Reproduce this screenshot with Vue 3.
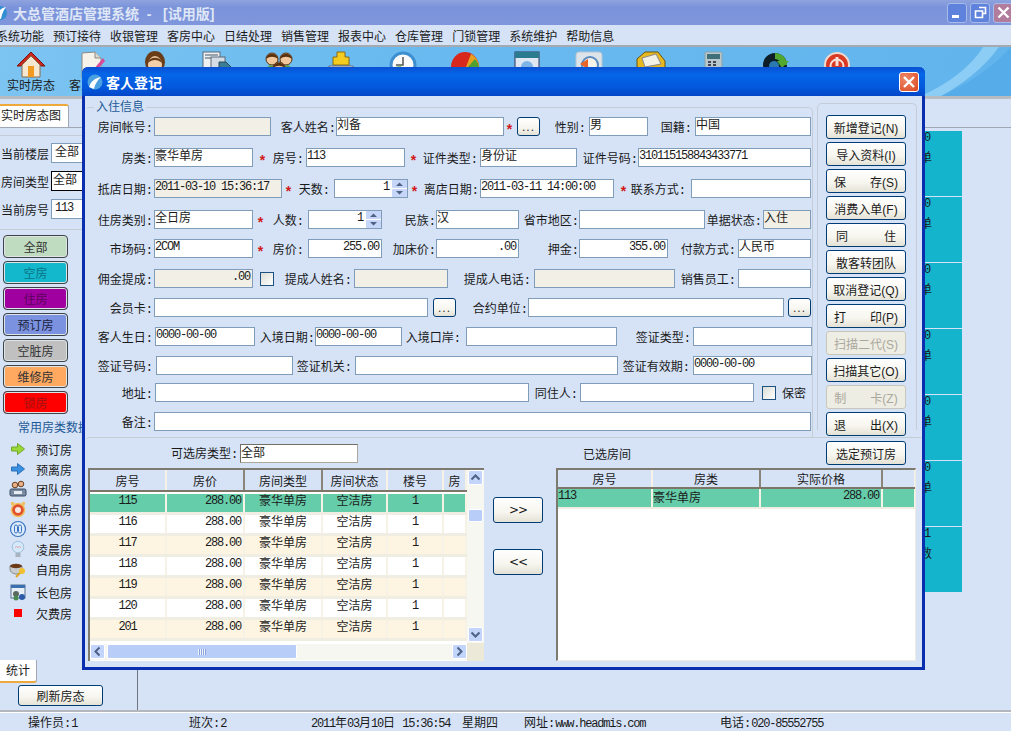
<template>
  <div class="app">
    <!-- 主窗口标题栏 -->
    <div class="titlebar">
      <svg class="app-icon" width="14" height="16" viewBox="0 0 14 16"><circle cx="3" cy="8" r="7" fill="#2f8fd0"/><path d="M-2 12 C1 6 4 3 9 2 C6 6 5 9 4 14 Z" fill="#fff"/></svg>
      <span class="title-text">{{ windowTitle }}</span>
      <div class="win-btns">
        <span class="win-btn"><i class="min-mark"></i></span>
        <span class="win-btn"><svg width="13" height="13" viewBox="0 0 13 13"><path d="M5 1.5h6.5v6h-3M1.5 5h7v6.5h-7z" fill="none" stroke="#fff" stroke-width="1.6"/></svg></span>
        <span class="win-btn close"><svg width="13" height="13" viewBox="0 0 13 13"><path d="M1.5 1.5l10 10M11.5 1.5l-10 10" stroke="#fff" stroke-width="2.4"/></svg></span>
      </div>
    </div>
    <div class="menubar">
      <span v-for="m in menus" :key="m">{{ m }}</span>
    </div>

    <!-- 工具栏 -->
    <div class="toolbar">
      <svg class="swoosh" width="90" height="49" viewBox="0 0 90 49"><path d="M20 49 C45 38 70 22 90 0 L90 49 Z" fill="#4fa5e6" opacity=".6"/><path d="M0 49 C25 38 50 20 62 0 L78 0 C62 22 40 38 20 49 Z" fill="#9ad6f7" opacity=".75"/></svg>
      <div v-for="t in tools" :key="t.id" class="tool">
        <svg width="30" height="30" viewBox="0 0 30 30">
          <template v-if="t.id === 'house'">
            <path d="M15 2 L29 16 L25 16 L15 6 L5 16 L1 16 Z" fill="#c8281e" stroke="#7a1510"/>
            <path d="M6 15 L15 6 L24 15 L24 27 L6 27 Z" fill="#f5e8d0" stroke="#8a6a48"/>
            <rect x="12" y="16" width="6" height="11" fill="#f09a20"/>
          </template>
          <template v-else-if="t.id === 'doc'">
            <path d="M4 3 L17 2 L23 8 L23 28 L4 28 Z" fill="#f6f3ea" stroke="#8a8a84"/>
            <path d="M17 2 L17 8 L23 8" fill="#dcdad0" stroke="#8a8a84"/>
            <path d="M25 8 L16 19 L18 21 L27 11 Z" fill="#d84a98"/>
            <path d="M16 19 L14 23 L18 21 Z" fill="#e8c040"/>
          </template>
          <template v-else-if="t.id === 'person'">
            <ellipse cx="15" cy="12" rx="10" ry="11" fill="#6a3c18"/>
            <ellipse cx="15" cy="15" rx="7" ry="9" fill="#f6cfa8"/>
            <path d="M8 13 C9 6 21 6 22 13 C18 9 12 9 8 13 Z" fill="#6a3c18"/>
          </template>
          <template v-else-if="t.id === 'docs'">
            <rect x="1" y="2" width="17" height="24" fill="#eef0f2" stroke="#5a6a78"/>
            <path d="M3 5h13M3 8h13" stroke="#46586a"/>
            <rect x="9" y="7" width="14" height="19" fill="#d4dde6" stroke="#5a6a78"/>
            <path d="M17 12 L24 12 L29 17 L29 26 L17 26 Z" fill="#3c7d96" stroke="#2c4a5a"/>
          </template>
          <template v-else-if="t.id === 'people'">
            <circle cx="8" cy="9" r="6" fill="#f3c79c" stroke="#5a3210"/>
            <circle cx="22" cy="9" r="6" fill="#f3c79c" stroke="#5a3210"/>
            <path d="M2 9 C3 2 13 2 14 9 C10 6 6 6 2 9 Z" fill="#5a3210"/>
            <path d="M16 9 C17 2 27 2 28 9 C24 6 20 6 16 9 Z" fill="#5a3210"/>
            <path d="M1 24 C2 16 6 14 9 16 L21 16 C24 14 28 16 29 24 Z" fill="#5fa33a"/>
            <circle cx="15" cy="18" r="6" fill="#f3c79c" stroke="#5a3210"/>
            <path d="M9 18 C10 11 20 11 21 18 C17 15 13 15 9 18 Z" fill="#5a3210"/>
          </template>
          <template v-else-if="t.id === 'coins'">
            <path d="M11 2 h8 v5 h4 v8 H7 V7 h4 Z" fill="#f4cc20" stroke="#8a6a10"/>
            <path d="M3 16 H27 L29 26 H1 Z" fill="#e8eaf0" stroke="#667"/>
          </template>
          <template v-else-if="t.id === 'clock'">
            <circle cx="15" cy="15" r="12" fill="#fafafa" stroke="#3d8fd0" stroke-width="3"/>
            <path d="M15 7 V15 L8 15" stroke="#555" stroke-width="1.500" fill="none"/>
            <path d="M3 18 A12 12 0 0 0 10 26 L14 15 Z" fill="#6ab050" opacity=".7"/>
          </template>
          <template v-else-if="t.id === 'pie'">
            <path d="M1 17 A14 15 0 0 1 29 17 Z" fill="#d8281e"/>
            <path d="M21 4 A14 15 0 0 1 29 17 L16 17 Z" fill="#e8a020"/>
            <path d="M25 9 A14 15 0 0 1 29 17 L18 17 Z" fill="#50a030"/>
            <path d="M1 17 H29 L28 26 H2 Z" fill="#a81810"/>
          </template>
          <template v-else-if="t.id === 'window'">
            <rect x="3" y="2" width="24" height="26" fill="#dfe8f2" stroke="#335"/>
            <rect x="3" y="2" width="24" height="6" fill="#2a7a90"/>
            <circle cx="15" cy="17" r="6" fill="#7fb4e6"/>
          </template>
          <template v-else-if="t.id === 'refresh'">
            <rect x="2" y="2" width="26" height="26" rx="3" fill="#dce4ea" stroke="#b8c4ce"/>
            <circle cx="16" cy="15" r="8" fill="#f7f3e8" stroke="#5a8ac0" stroke-width="2"/>
            <path d="M6 14 L14 9 L14 19 Z" fill="#e86428"/>
          </template>
          <template v-else-if="t.id === 'folder'">
            <path d="M1 9 L9 2 L22 2 L29 11 L29 28 L1 28 Z" fill="#e8b820" stroke="#6a5210"/>
            <path d="M6 8 L20 4 L25 14 L9 17 Z" fill="#f2f0e4" stroke="#888"/>
          </template>
          <template v-else-if="t.id === 'calc'">
            <rect x="7" y="2" width="17" height="26" rx="1" fill="#b8c8cc" stroke="#8aa0a8"/>
            <rect x="9" y="4" width="13" height="5" fill="#3f6f78"/>
            <path d="M10 12h3M15 12h3M10 15h3M15 15h3" stroke="#445" stroke-width="2"/>
          </template>
          <template v-else-if="t.id === 'arrow'">
            <circle cx="15" cy="15" r="12" fill="#0e1e28"/>
            <path d="M15 3 A12 12 0 0 1 27 15 L21 15 A6 6 0 0 0 15 9 Z" fill="#50a830"/>
            <path d="M29 11 L22 18 L17 11 Z" fill="#50a830"/>
            <circle cx="14" cy="16" r="5" fill="#2a7ab0"/>
          </template>
          <template v-else>
            <circle cx="15" cy="15" r="12" fill="#d83a24" stroke="#f0d8cc" stroke-width="2"/>
            <circle cx="15" cy="16" r="6.500" fill="none" stroke="#f8e0d8" stroke-width="2"/>
            <rect x="13.500" y="7" width="3" height="9" fill="#f8e0d8"/>
          </template>
        </svg>
        <span v-if="t.label" class="tool-label">{{ t.label }}</span>
      </div>
    </div>

    <div class="main">
      <!-- 左侧面板 -->
      <div class="left-panel">
        <div class="tab-row"><div class="tab">实时房态图</div></div>
        <div class="filters">
          <div v-for="f in filters" :key="f.label" class="filter">
            <span class="filter-label">{{ f.label }}</span>
            <div class="filter-box" :class="{ active: f.active, mono: f.mono }">{{ f.value }}</div>
          </div>
        </div>
        <div class="status-btns">
          <div v-for="b in statusBtns" :key="b.t" class="status-btn" :style="{ background: b.bg, color: b.fg }">{{ b.t }}</div>
        </div>
        <div class="legend-title">常用房类数据</div>
        <div class="legend">
          <div v-for="l in legends" :key="l.t" class="legend-row" :class="l.cls">
            <svg class="legend-icon" width="18" height="18" viewBox="0 0 18 18">
              <template v-if="l.i === 'green'"><path d="M2.500 7h6V3.500L15.500 9l-7 5.500V11h-6z" fill="#9ad838" stroke="#6fa828"/></template>
              <template v-else-if="l.i === 'blue'"><path d="M2.500 7h6V3.500L15.500 9l-7 5.500V11h-6z" fill="#3a90e0" stroke="#2a70b8"/></template>
              <template v-else-if="l.i === 'team'"><circle cx="6" cy="5" r="2.800" fill="#e8b088" stroke="#6a4020"/><circle cx="12" cy="4" r="2.800" fill="#e8b088" stroke="#6a4020"/><rect x="1" y="9" width="16" height="7" rx="1.500" fill="#7a8ca4" stroke="#3a4a60"/><rect x="5" y="11" width="8" height="3" fill="#e8ecf0"/></template>
              <template v-else-if="l.i === 'alarm'"><circle cx="9" cy="10" r="6.500" fill="#e0502c" stroke="#f0c060" stroke-width="1.500"/><circle cx="9" cy="10" r="3" fill="#f8e8e0"/><circle cx="3.500" cy="3.500" r="1.800" fill="#f0c060"/><circle cx="14.500" cy="3.500" r="1.800" fill="#f0c060"/></template>
              <template v-else-if="l.i === 'half'"><circle cx="9" cy="9" r="7.500" fill="#dcebfb" stroke="#3a74c0" stroke-width="1.200"/><rect x="5.500" y="5" width="3" height="8" rx="1.500" fill="none" stroke="#3a74c0"/><rect x="9.500" y="5" width="3" height="8" rx="1.500" fill="none" stroke="#3a74c0"/></template>
              <template v-else-if="l.i === 'bulb'"><circle cx="9" cy="7" r="5.800" fill="#d4e8fb" stroke="#a4c0d8"/><path d="M6 8l1.500-2 1.500 2 1.500-2L12 8" fill="none" stroke="#e8a0a0" stroke-width=".8"/><rect x="6.500" y="13" width="5" height="4" fill="#a8b4be"/></template>
              <template v-else-if="l.i === 'cup'"><path d="M1 6h12v3c0 3-3 5-6 5s-6-2-6-5z" fill="#c8ccd0" stroke="#8a8a80"/><ellipse cx="7" cy="6" rx="6" ry="2.200" fill="#6a3a18"/><circle cx="13" cy="11" r="3" fill="#f0c030"/><path d="M11 13l-4 4" stroke="#e0a820" stroke-width="2"/></template>
              <template v-else-if="l.i === 'cal'"><rect x="2" y="2" width="14" height="13" fill="#e8eef6" stroke="#5a7090"/><rect x="2" y="2" width="14" height="3" fill="#3a70b0"/><circle cx="7" cy="11" r="3" fill="#5a6a60"/><circle cx="7" cy="15" r="2.500" fill="#4a8a50"/><circle cx="13" cy="14" r="3" fill="#2a5aa8"/></template>
              <template v-else><rect x="5" y="5" width="8" height="8" fill="#f00"/></template>
            </svg>
            <span>{{ l.t }}</span>
          </div>
        </div>
        <div class="stat-tab">统计</div>
        <div class="xp-btn refresh-btn">刷新房态</div>
      </div>

      <!-- 房态区域，大部分被对话框盖住 -->
      <div class="room-area">
        <div class="tiles">
          <div v-for="(r, i) in tiles" :key="i" class="tile">
            <div class="mono tile-num">{{ r[0] }}</div>
            <div class="tile-sub">{{ r[1] }}</div>
          </div>
        </div>
      </div>
    </div>

    <div class="statusbar">
      <span class="st" style="width: 161px">操作员:<b class="mono">1</b></span>
      <span class="st" style="width: 122px">班次:<b class="mono">2</b></span>
      <span class="st" style="width: 151px"><b class="mono">2011</b>年<b class="mono">03</b>月<b class="mono">10</b>日 <b class="mono">15:36:54</b></span>
      <span class="st" style="width: 62px">星期四</span>
      <span class="st" style="width: 196px">网址:<b class="mono">www.headmis.com</b></span>
      <span class="st">电话:<b class="mono">020-85552755</b></span>
    </div>

    <!-- 客人登记对话框 -->
    <div class="dialog">
      <div class="dlg-title">
        <svg width="16" height="16" viewBox="0 0 16 16"><circle cx="8" cy="8" r="7.500" fill="#4a9fe0"/><path d="M2 13 C4 7 8 4 14 3 C10 7 8 10 7 15 Z" fill="#fff"/></svg>
        <span>客人登记</span>
        <div class="dlg-close"><svg width="12" height="12" viewBox="0 0 12 12"><path d="M1 1l10 10M11 1L1 11" stroke="#fff" stroke-width="2.400"/></svg></div>
      </div>
      <div class="dlg-top">
        <div class="form-group">
          <span class="group-legend">入住信息</span>
          <div v-for="(row, ri) in formRows" :key="ri" class="form-row" :style="{ marginTop: row.mt + 'px' }">
            <template v-for="(it, k) in row.items" :key="k">
              <div v-if="it.k === 'l'" class="f-label" :style="it.s">{{ it.t }}</div>
              <div v-else-if="it.k === 's'" class="f-star" :style="it.s">*</div>
              <div v-else-if="it.k === 'b'" class="xp-btn f-more" :style="it.s">...</div>
              <div v-else-if="it.k === 'c'" class="f-check" :style="it.s"></div>
              <div v-else class="f-input" :class="{ dis: it.dis, right: it.right, mono: it.mono }" :style="it.s">
                <span>{{ it.t }}</span>
                <div v-if="it.spin" class="spin">
                  <svg width="15" height="17" viewBox="0 0 15 17"><rect width="15" height="8" rx="1" fill="#c6d6f8"/><rect y="9" width="15" height="8" rx="1" fill="#c6d6f8"/><path d="M4 6l3.500-3.500L11 6zM4 11l3.500 3.500L11 11z" fill="#4d6185"/></svg>
                </div>
              </div>
            </template>
          </div>
        </div>
        <div class="action-group">
          <div v-for="b in actions" :key="b.t" class="xp-btn action" :class="{ off: b.off }">{{ b.t }}</div>
        </div>
      </div>

      <div class="dlg-bottom">
        <div class="pick-row">
          <span class="pick-label">可选房类型:</span>
          <div class="pick-input">全部</div>
          <span class="picked-label">已选房间</span>
          <div class="xp-btn pick-btn">选定预订房</div>
        </div>
        <div class="grids">
          <div class="grid left-grid">
            <div class="grid-body">
              <div class="g-head">
                <div v-for="c in leftCols" :key="c.t" class="g-cell" :style="{ width: c.w + 'px' }">{{ c.t }}</div>
              </div>
              <div v-for="(r, i) in rooms" :key="r" class="g-row" :class="{ sel: i === 0, alt: i > 0 && i % 2 === 0 }">
                <div class="g-cell mono" :style="{ width: leftCols[0].w + 'px' }">{{ r }}</div>
                <div class="g-cell mono num" :style="{ width: leftCols[1].w + 'px' }">288.00</div>
                <div class="g-cell" :style="{ width: leftCols[2].w + 'px' }">豪华单房</div>
                <div class="g-cell" :style="{ width: leftCols[3].w + 'px' }">空洁房</div>
                <div class="g-cell mono" :style="{ width: leftCols[4].w + 'px' }">1</div>
                <div class="g-cell" :style="{ width: leftCols[5].w + 'px' }"></div>
              </div>
              <div class="hscroll">
                <div class="sb-btn"><svg width="15" height="15" viewBox="0 0 15 15"><path d="M9.500 3.500L5.500 7.500l4 4" fill="none" stroke="#4d6185" stroke-width="2"/></svg></div>
                <div class="h-thumb"><i></i></div>
                <div class="sb-btn"><svg width="15" height="15" viewBox="0 0 15 15"><path d="M5.500 3.500l4 4-4 4" fill="none" stroke="#4d6185" stroke-width="2"/></svg></div>
              </div>
            </div>
            <div class="vscroll">
              <div class="sb-btn"><svg width="15" height="15" viewBox="0 0 15 15"><path d="M3.500 9.500l4-4 4 4" fill="none" stroke="#4d6185" stroke-width="2"/></svg></div>
              <div class="v-thumb"></div>
              <div class="sb-btn v-down"><svg width="15" height="15" viewBox="0 0 15 15"><path d="M3.500 5.500l4 4 4-4" fill="none" stroke="#4d6185" stroke-width="2"/></svg></div>
              <div class="corner"></div>
            </div>
          </div>
          <div class="move-btns">
            <div class="xp-btn move">&gt;&gt;</div>
            <div class="xp-btn move">&lt;&lt;</div>
          </div>
          <div class="grid right-grid">
            <div class="g-head short">
              <div v-for="c in rightCols" :key="c.t" class="g-cell" :style="{ width: c.w + 'px' }">{{ c.t }}</div>
            </div>
            <div class="g-row sel short-row">
              <div class="g-cell mono lft" :style="{ width: rightCols[0].w + 'px' }">113</div>
              <div class="g-cell lft" :style="{ width: rightCols[1].w + 'px' }">豪华单房</div>
              <div class="g-cell mono num" :style="{ width: rightCols[2].w + 'px' }">288.00</div>
              <div class="g-cell" :style="{ width: rightCols[3].w + 'px' }"></div>
            </div>
          </div>
        </div>
      </div>
    </div>
  </div>
</template>

<script setup>
const windowTitle = '大总管酒店管理系统  -   [试用版]'

const menus = ['系统功能', '预订接待', '收银管理', '客房中心', '日结处理', '销售管理', '报表中心', '仓库管理', '门锁管理', '系统维护', '帮助信息']

const tools = [
  { id: 'house', label: '实时房态' },
  { id: 'doc', label: '客人登记' },
  { id: 'person' }, { id: 'docs' }, { id: 'people' }, { id: 'coins' }, { id: 'clock' },
  { id: 'pie' }, { id: 'window' }, { id: 'refresh' }, { id: 'folder' }, { id: 'calc' },
  { id: 'arrow' }, { id: 'power' }
]

const filters = [
  { label: '当前楼层', value: '全部' },
  { label: '房间类型', value: '全部', active: true },
  { label: '当前房号', value: '113', mono: true }
]

const statusBtns = [
  { t: '全部', bg: '#c0dcc0', fg: '#333' },
  { t: '空房', bg: '#14b8cc', fg: '#0b7488' },
  { t: '住房', bg: '#a000a0', fg: '#5c005c' },
  { t: '预订房', bg: '#7b92e0', fg: '#1c2440' },
  { t: '空脏房', bg: '#c0c0c0', fg: '#333' },
  { t: '维修房', bg: '#ffa860', fg: '#333' },
  { t: '锁房', bg: '#ff0000', fg: '#a01010' }
]

const legends = [
  { t: '预订房', i: 'green' }, { t: '预离房', i: 'blue' }, { t: '团队房', i: 'team' },
  { t: '钟点房', i: 'alarm' }, { t: '半天房', i: 'half' }, { t: '凌晨房', i: 'bulb' },
  { t: '自用房', i: 'cup' }, { t: '长包房', i: 'cal', cls: 'gap2' }, { t: '欠费房', i: 'sq', cls: 'gap1' }
]

const tiles = [['0', '单'], ['0', '单'], ['0', '单'], ['0', '单'], ['0', '单'], ['0', '单'], ['1', '数']]

// 表单按原界面的横向坐标排列，相邻控件的间距由坐标算出
const L = (a, b, t) => ({ k: 'l', a, b, t })
const I = (a, b, t = '', o = {}) => ({ k: 'i', a, b, t, mono: /^[\x00-\x7f]+$/.test(t), ...o })
const S = (a) => ({ k: 's', a, b: a + 9 })
const B = (a, b) => ({ k: 'b', a, b })
const C = (a) => ({ k: 'c', a, b: a + 14 })

const rawRows = [
  [117, [L(90, 153, '房间帐号:'), I(154, 271, '', { dis: true }), L(275, 336, '客人姓名:'), I(336, 504, '刘备'), S(505), B(517, 540), L(550, 586, '性别:'), I(589, 648, '男'), L(655, 692, '国籍:'), I(695, 811, '中国')]],
  [148, [L(90, 153, '房类:'), I(154, 253, '豪华单房'), S(258), L(268, 304, '房号:'), I(306, 405, '113'), S(409), L(418, 478, '证件类型:'), I(480, 577, '身份证'), L(578, 638, '证件号码:'), I(638, 811, '310115158843433771')]],
  [179, [L(90, 153, '抵店日期:'), I(154, 282, '2011-03-10 15:36:17', { dis: true }), S(284), L(294, 330, '天数:'), I(334, 408, '1', { right: true, spin: true }), S(410), L(420, 479, '离店日期:'), I(480, 614, '2011-03-11 14:00:00'), S(619), L(628, 686, '联系方式:'), I(691, 811)]],
  [210, [L(90, 153, '住房类别:'), I(154, 253, '全日房'), S(256), L(268, 304, '人数:'), I(308, 382, '1', { right: true, spin: true }), L(400, 436, '民族:'), I(436, 519, '汉'), L(522, 579, '省市地区:'), I(579, 705, ''), L(706, 762, '单据状态:'), I(763, 811, '入住', { dis: true })]],
  [239, [L(90, 153, '市场码:'), I(154, 253, '2COM'), S(256), L(268, 304, '房价:'), I(308, 382, '255.00', { right: true }), L(390, 436, '加床价:'), I(436, 519, '.00', { right: true }), L(540, 579, '押金:'), I(579, 668, '355.00', { right: true }), L(676, 736, '付款方式:'), I(738, 811, '人民币')]],
  [269, [L(90, 153, '佣金提成:'), I(154, 253, '.00', { dis: true, right: true }), C(260), L(280, 352, '提成人姓名:'), I(354, 448, '', { dis: true }), L(458, 531, '提成人电话:'), I(534, 675, '', { dis: true }), L(678, 736, '销售员工:'), I(738, 811)]],
  [298, [L(90, 153, '会员卡:'), I(154, 428), B(433, 456), L(468, 528, '合约单位:'), I(528, 784), B(788, 811)]],
  [327, [L(90, 153, '客人生日:'), I(155, 255, '0000-00-00'), L(256, 315, '入境日期:'), I(315, 402, '0000-00-00'), L(403, 461, '入境口岸:'), I(466, 617), L(630, 691, '签证类型:'), I(693, 812)]],
  [356, [L(90, 153, '签证号码:'), I(156, 293), L(294, 352, '签证机关:'), I(355, 618), L(620, 690, '签证有效期:'), I(693, 812, '0000-00-00')]],
  [383, [L(90, 153, '地址:'), I(155, 529), L(532, 578, '同住人:'), I(580, 754), C(762), { k: 'l', a: 781, b: 806, t: '保密' }]],
  [412, [L(90, 153, '备注:'), I(154, 811)]]
]

const formRows = rawRows.map(([top, items], i) => {
  let prev = 86 // 表单分组框内容的起始 x
  const out = items.map((it) => {
    const s = { marginLeft: it.a - prev + 'px', width: it.b - it.a + 'px' }
    prev = it.b
    return { ...it, s }
  })
  const prevTop = i === 0 ? 108 : rawRows[i - 1][0] + 19
  return { mt: top - prevTop, items: out }
})

const actions = [
  { t: '新增登记(N)' }, { t: '导入资料(I)' }, { t: '保　　存(S)' }, { t: '消费入单(F)' }, { t: '同　　　住' },
  { t: '散客转团队' }, { t: '取消登记(Q)' }, { t: '打　　印(P)' }, { t: '扫描二代(S)', off: true },
  { t: '扫描其它(O)' }, { t: '制　　卡(Z)', off: true }, { t: '退　　出(X)' }
]

const leftCols = [
  { t: '房号', w: 77 }, { t: '房价', w: 78 }, { t: '房间类型', w: 78 },
  { t: '房间状态', w: 65 }, { t: '楼号', w: 56 }, { t: '房', w: 23 }
]
const rightCols = [
  { t: '房号', w: 95 }, { t: '房类', w: 108 }, { t: '实际价格', w: 122 }, { t: '', w: 33 }
]
const rooms = ['115', '116', '117', '118', '119', '120', '201']
</script>

<style>
html, body {
  margin: 0;
  padding: 0;
  background: #d6e3f7;
}
</style>

<style scoped>
.app {
  position: relative;
  width: 1011px;
  height: 731px;
  overflow: hidden;
  display: flex;
  flex-direction: column;
  background: #d6e3f7;
  color: #1a1a1a;
  font-family: "Liberation Sans", "Noto Sans CJK SC", sans-serif;
  font-size: 12px;
}

.mono {
  font-family: "Liberation Mono", "Noto Sans CJK SC", monospace;
  font-size: 12px;
  letter-spacing: -1.2px;
  font-weight: normal;
}

/* 标题栏 */
.titlebar {
  height: 25px;
  flex: none;
  display: flex;
  align-items: center;
  background: linear-gradient(#8ea3de 0, #7a93da 30%, #7f96dc 100%);
}

.app-icon {
  margin-left: -3px;
  flex: none;
}

.title-text {
  margin-left: 2px;
  font-size: 14px;
  font-weight: bold;
  color: #dfe6f6;
  white-space: pre;
}

.win-btns {
  margin-left: auto;
  display: flex;
  gap: 3px;
  margin-right: -2px;
}

.win-btn {
  display: flex;
  align-items: center;
  justify-content: center;
  border: 1px solid #a8bce8;
  border-radius: 3px;
  background: #5f82dc;
  width: 18px;
  height: 18px;
}

.win-btn.close {
  background: #b27c9c;
}

.min-mark {
  width: 7px;
  height: 3px;
  background: #fff;
  margin-top: 8px;
  margin-right: 4px;
}

.menubar {
  height: 20px;
  flex: none;
  display: flex;
  gap: 9px;
  align-items: center;
  margin-left: -4px;
  white-space: nowrap;
}

/* 工具栏 */
.toolbar {
  position: relative;
  flex: none;
  display: flex;
  border-top: 2px solid #a4aab0;
  border-bottom: 3px solid #b8bcc0;
  height: 49px;
  background: linear-gradient(100deg, #7cc4f2 0, #68baef 40%, #62b4ed 100%);
}

.swoosh {
  position: absolute;
  right: 0;
  top: 0;
}

.tool {
  position: relative;
  width: 62px;
  flex: none;
  display: flex;
  flex-direction: column;
  align-items: center;
  padding-top: 3px;
  box-sizing: border-box;
}

.tool svg {
  margin-bottom: -2px;
}

.tool:first-child {
  margin-left: -2px;
}

.tool-label {
  line-height: 16px;
  white-space: nowrap;
}

/* 主区域 */
.main {
  flex: 1;
  display: flex;
  min-height: 0;
}

.left-panel {
  width: 137px;
  flex: none;
  border-right: 1px solid #70767e;
  overflow: hidden;
  position: relative;
}

.tab-row {
  margin-top: 5px;
  height: 23px;
  border-bottom: 1px solid #9fa8b4;
}

.tab {
  width: 69px;
  height: 23px;
  box-sizing: border-box;
  background: #fff;
  border-top: 2px solid #eda93c;
  border-right: 1px solid #9fa8b4;
  border-radius: 0 3px 0 0;
  padding-left: 1px;
  line-height: 20px;
  white-space: nowrap;
}

.filters {
  margin-top: 7px;
  padding: 7px 0 10px;
  border-top: 1px solid #c4cdd6;
  border-bottom: 1px solid #c4cdd6;
  display: flex;
  flex-direction: column;
  gap: 8px;
}

.filter {
  display: flex;
  height: 20px;
  align-items: center;
}

.filter-label {
  width: 51px;
  padding-left: 1px;
  box-sizing: border-box;
  white-space: nowrap;
}

.filter-box {
  width: 60px;
  height: 20px;
  box-sizing: border-box;
  border: 1px solid #7f9db9;
  background: #fff;
  padding-left: 3px;
  line-height: 17px;
}

.filter-box.active {
  border-color: #000;
  padding-left: 1px;
}

.status-btns {
  margin: 5px 0 0 3px;
  display: flex;
  flex-direction: column;
  gap: 3px;
}

.status-btn {
  width: 65px;
  height: 23px;
  box-sizing: border-box;
  border: 1px solid #3c4448;
  border-radius: 4px;
  box-shadow: inset 0 0 0 1px #dfe4e8;
  display: flex;
  align-items: center;
  justify-content: center;
}

.legend-title {
  margin: 6px 0 0 18px;
  height: 16px;
  line-height: 16px;
  color: #1d5a96;
  white-space: nowrap;
}

.legend {
  margin-top: 3px;
}

.legend-row {
  height: 20px;
  display: flex;
  align-items: center;
}

.legend-row.gap2 {
  margin-top: 3px;
}

.legend-row.gap1 {
  margin-top: 1px;
}

.legend-icon {
  margin-left: 9px;
  margin-right: 9px;
  flex: none;
}

.stat-tab {
  margin-top: 37px;
  width: 37px;
  height: 23px;
  box-sizing: border-box;
  background: #fff;
  border-bottom: 2px solid #eda93c;
  border-right: 1px solid #9fa8b4;
  border-radius: 0 0 3px 0;
  padding-left: 6px;
  line-height: 22px;
}

.refresh-btn {
  margin: 2px 0 0 18px;
  width: 85px;
  height: 21px;
}

.room-area {
  flex: 1;
  min-width: 0;
  margin-top: 28px;
  border-top: 1px solid #9fa8b4;
  overflow: hidden;
}

.tiles {
  margin: 3px 0 0 722px;
  width: 102px;
  display: flex;
  flex-direction: column;
  gap: 1px;
}

.tile {
  height: 65px;
  box-sizing: border-box;
  background: #14b5cc;
  padding: 0 0 0 60px;
  line-height: 14px;
}

.tile-num {
  margin-left: 4px;
}

.tile-sub {
  margin-top: 6px;
}

.statusbar {
  height: 19px;
  flex: none;
  display: flex;
  align-items: center;
  padding-left: 28px;
  border-top: 2px solid #b4b8be;
  box-shadow: inset 0 1px 0 #fff;
  white-space: pre;
}

.st {
  flex: none;
  font-family: "Liberation Mono", "Noto Sans CJK SC", monospace;
}

/* XP 风格按钮 */
.xp-btn {
  box-sizing: border-box;
  border: 1px solid #003c74;
  border-radius: 3px;
  background: linear-gradient(#fff 0, #f6f5ee 60%, #e4e2d6 100%);
  display: flex;
  align-items: center;
  justify-content: center;
  white-space: pre;
}

/* 对话框 */
.dialog {
  position: absolute;
  left: 82px;
  top: 67px;
  width: 843px;
  height: 603px;
  box-sizing: border-box;
  border: 3px solid #0a2fae;
  border-top: none;
  border-radius: 6px 6px 0 0;
  background: #d6e3f7;
  display: flex;
  flex-direction: column;
}

.dlg-title {
  height: 29px;
  flex: none;
  margin: 0 -3px;
  padding-left: 5px;
  display: flex;
  align-items: center;
  gap: 3px;
  border-radius: 6px 6px 0 0;
  background: linear-gradient(#0a4fd2 0, #0466e8 25%, #0358dc 70%, #0246c8 100%);
  color: #fff;
  font-size: 14px;
  font-weight: bold;
  position: relative;
}

.dlg-close {
  position: absolute;
  right: 6px;
  top: 5px;
  width: 20px;
  height: 20px;
  box-sizing: border-box;
  border: 1px solid #fff;
  border-radius: 3px;
  background: radial-gradient(circle at 30% 30%, #ef8a68, #d9471f);
  display: flex;
  align-items: center;
  justify-content: center;
}

.dlg-top {
  height: 341px;
  flex: none;
  display: flex;
}

.form-group {
  position: relative;
  margin-top: 11px;
  width: 728px;
  height: 330px;
  box-sizing: border-box;
  border: 1px solid #c4cdd6;
  border-bottom: none;
  border-left-color: transparent;
  border-radius: 5px 5px 0 0;
}

.group-legend {
  position: absolute;
  left: 8px;
  top: -8px;
  padding: 0 2px;
  background: #d6e3f7;
  color: #1d5a96;
  line-height: 15px;
}

.form-row {
  display: flex;
  height: 19px;
}

.f-label {
  flex: none;
  display: flex;
  justify-content: flex-end;
  align-items: center;
  height: 19px;
  white-space: nowrap;
  font-family: "Liberation Mono", "Noto Sans CJK SC", monospace;
}

.f-star {
  flex: none;
  color: #d01818;
  font-size: 14px;
  font-weight: bold;
  text-align: center;
  line-height: 24px;
}

.f-input {
  position: relative;
  flex: none;
  height: 19px;
  box-sizing: border-box;
  border: 1px solid #7f9db9;
  background: #fff;
  line-height: 14px;
  white-space: nowrap;
  overflow: hidden;
}

.f-input.mono {
  line-height: 15px;
}

.f-input.dis {
  background: #f2f0e6;
}

.f-input.right {
  text-align: right;
  padding-right: 2px;
}

.f-more {
  flex: none;
  height: 19px;
  color: #333;
  letter-spacing: 1px;
  align-items: flex-end;
  padding-bottom: 1px;
}

.f-check {
  flex: none;
  height: 14px;
  box-sizing: border-box;
  border: 1px solid #1c5180;
  margin-top: 3px;
  background: linear-gradient(135deg, #dcdcd7, #fff);
}

.spin {
  position: absolute;
  right: 0;
  top: 0;
  height: 17px;
}

.spin svg {
  display: block;
}

.f-input:has(.spin) {
  padding-right: 18px;
}

.action-group {
  margin: 7px 0 0 4px;
  width: 100px;
  height: 327px;
  box-sizing: border-box;
  border: 1px solid #c4cdd6;
  border-bottom: none;
  border-radius: 5px 5px 0 0;
  padding: 11px 0 0 8px;
  display: flex;
  flex-direction: column;
  gap: 3px;
}

.action {
  flex: none;
  width: 80px;
  height: 24px;
}

.action.off {
  border-color: #c9c7ba;
  background: #eeede4;
  color: #aaa89c;
}

.dlg-bottom {
  flex: 1;
  min-height: 0;
  border-top: 1px solid #c4cdd6;
  border-radius: 5px 0 0 0;
  margin-right: 1px;
}

.pick-row {
  height: 30px;
  display: flex;
  align-items: center;
  white-space: nowrap;
}

.pick-label {
  margin-left: 86px;
  width: 69px;
  font-family: "Liberation Mono", "Noto Sans CJK SC", monospace;
}

.pick-input {
  width: 118px;
  height: 19px;
  box-sizing: border-box;
  border: 1px solid #aca899;
  border-top-color: #716f64;
  border-left-color: #716f64;
  background: #fff;
  line-height: 17px;
}

.picked-label {
  margin-left: 225px;
  width: 44px;
}

.pick-btn {
  margin-left: 199px;
  width: 80px;
  height: 24px;
}

.grids {
  display: flex;
}

.grid {
  box-sizing: border-box;
  height: 193px;
  border-top: 2px solid #7d7a6f;
  border-left: 2px solid #7d7a6f;
  background: #fff;
  overflow: hidden;
}

.left-grid {
  margin-left: 3px;
  width: 396px;
  display: flex;
}

.grid-body {
  width: 377px;
  flex: none;
  display: flex;
  flex-direction: column;
}

.g-head {
  flex: none;
  display: flex;
  background: #d6e3f7;
  border-bottom: 2px solid #7d7568;
  height: 20px;
  margin-bottom: 2px;
}

.g-head.short {
  height: 17px;
  margin-bottom: 0;
}

.g-cell {
  flex: none;
  box-sizing: border-box;
  display: flex;
  align-items: center;
  justify-content: center;
  border-right: 2px solid #f6f2e6;
  white-space: nowrap;
  overflow: hidden;
}

.g-row .g-cell {
  padding-bottom: 7px;
}

.g-row .g-cell.mono {
  padding-bottom: 5px;
}

.g-head .g-cell:nth-child(2),
.g-head .g-cell:nth-child(3) {
  border-right-color: #8a8578;
}

.g-cell.num {
  justify-content: flex-end;
  padding-right: 2px;
}

.g-cell.lft {
  justify-content: flex-start;
}

.g-row {
  height: 21px;
  flex: none;
  display: flex;
  border-bottom: 3px solid #f0ede2;
  box-sizing: border-box;
}

.g-row.sel {
  background: #66cdaa;
}

.g-row.alt {
  background: #fdf5e2;
}

.g-row.short-row {
  height: 20px;
  border-bottom-width: 2px;
}

.g-row.short-row .g-cell {
  padding-bottom: 4px;
}

.hscroll {
  margin-top: auto;
  height: 16px;
  flex: none;
  display: flex;
  gap: 2px;
  background: #f7f7f2;
  margin-bottom: 1px;
}

.sb-btn {
  flex: none;
  width: 15px;
  height: 15px;
  border: 1px solid #fff;
  border-radius: 2px;
  background: #c3d5fa;
  box-sizing: border-box;
  display: flex;
  align-items: center;
  justify-content: center;
}

.sb-btn svg {
  flex: none;
}

.h-thumb {
  width: 190px;
  height: 15px;
  box-sizing: border-box;
  background: #b8cdf8;
  border: 1px solid #fff;
  border-radius: 2px;
  display: flex;
  align-items: center;
  justify-content: center;
}

.h-thumb i {
  width: 8px;
  height: 6px;
  background: repeating-linear-gradient(90deg, #eef3fd 0 1px, #8ca4d8 1px 2px);
}

.hscroll .sb-btn:last-child {
  margin-left: auto;
}

.vscroll {
  width: 17px;
  flex: none;
  display: flex;
  flex-direction: column;
  background: #f7f7f2;
  position: relative;
  padding-left: 1px;
  box-sizing: border-box;
}

.v-thumb {
  margin-top: 24px;
  width: 15px;
  height: 13px;
  box-sizing: border-box;
  background: #b8cdf8;
  border: 1px solid #fff;
  border-radius: 2px;
}

.v-down {
  margin-top: auto;
  margin-bottom: 19px;
}

.corner {
  position: absolute;
  left: 0;
  bottom: 0;
  width: 17px;
  height: 18px;
  background: #ece9d8;
}

.move-btns {
  width: 72px;
  flex: none;
  display: flex;
  flex-direction: column;
  align-items: center;
  padding: 29px 4px 0 0;
  gap: 26px;
  box-sizing: border-box;
}

.move {
  width: 50px;
  height: 26px;
  font-family: "DejaVu Sans", sans-serif;
  font-size: 12px;
  letter-spacing: -1px;
}

.right-grid {
  width: 360px;
  border-right: 1px solid #eeece2;
  border-bottom: 1px solid #eeece2;
}
</style>
